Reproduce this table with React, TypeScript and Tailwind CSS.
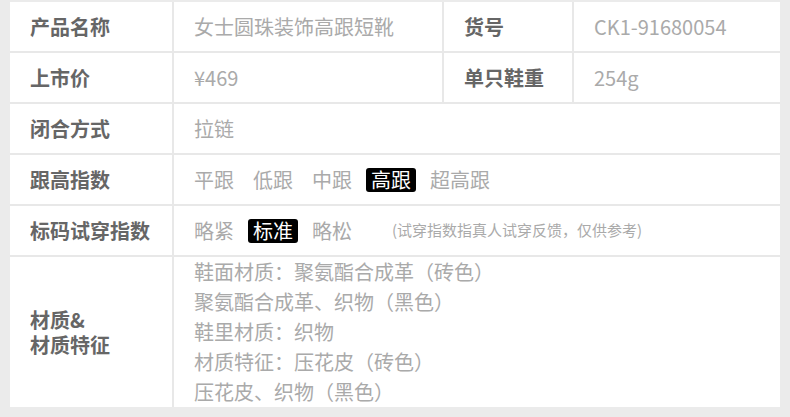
import React from 'react'

const font = { fontFamily: '"Noto Sans CJK SC", "Noto Sans", sans-serif' }

function Label({ children }: { children: React.ReactNode }) {
  return (
    <div className="flex items-center bg-white pl-[20px] text-[20px] font-bold leading-[25px] text-[#666666]">
      {children}
    </div>
  )
}

function Value({ children, span }: { children: React.ReactNode; span?: boolean }) {
  return (
    <div
      className={`flex items-center bg-white pl-[20px] text-[20px] text-[#aaaaaa] ${span ? 'col-span-3' : ''}`}
    >
      {children}
    </div>
  )
}

function Options({ items, active }: { items: string[]; active: string }) {
  return (
    <div className="-ml-[5px] flex items-center gap-[9px]">
      {items.map(item => (
        <span
          key={item}
          className={`rounded-[3px] px-[5px] leading-[24px] ${item === active ? 'bg-black text-white' : ''}`}
        >
          {item}
        </span>
      ))}
    </div>
  )
}

export default function App() {
  return (
    <div className="min-h-[417px] bg-[#ebebeb] px-[10px] pb-[10px] pt-[2px]" style={font}>
      <div className="grid grid-cols-[162px_268px_128px_206px] grid-rows-[49px_49px_49px_49px_49px_150px] gap-[2px] bg-[#e8e8e8]">
        <Label>产品名称</Label>
        <Value>女士圆珠装饰高跟短靴</Value>
        <Label>货号</Label>
        <Value>CK1-91680054</Value>

        <Label>上市价</Label>
        <Value>¥469</Value>
        <Label>单只鞋重</Label>
        <Value>254g</Value>

        <Label>闭合方式</Label>
        <Value span>拉链</Value>

        <Label>跟高指数</Label>
        <Value span>
          <Options items={['平跟', '低跟', '中跟', '高跟', '超高跟']} active="高跟" />
        </Value>

        <Label>标码试穿指数</Label>
        <Value span>
          <Options items={['略紧', '标准', '略松']} active="标准" />
          <span className="ml-[35px] text-[15px]">(试穿指数指真人试穿反馈，仅供参考)</span>
        </Value>

        <Label>
          <div className="leading-[25px]">
            <div>材质&amp;</div>
            <div>材质特征</div>
          </div>
        </Label>
        <div className="col-span-3 bg-white pl-[20px] text-[20px] leading-[30px] text-[#aaaaaa]">
          <div>鞋面材质：聚氨酯合成革（砖色）</div>
          <div>聚氨酯合成革、织物（黑色）</div>
          <div>鞋里材质：织物</div>
          <div>材质特征：压花皮（砖色）</div>
          <div>压花皮、织物（黑色）</div>
        </div>
      </div>
    </div>
  )
}
